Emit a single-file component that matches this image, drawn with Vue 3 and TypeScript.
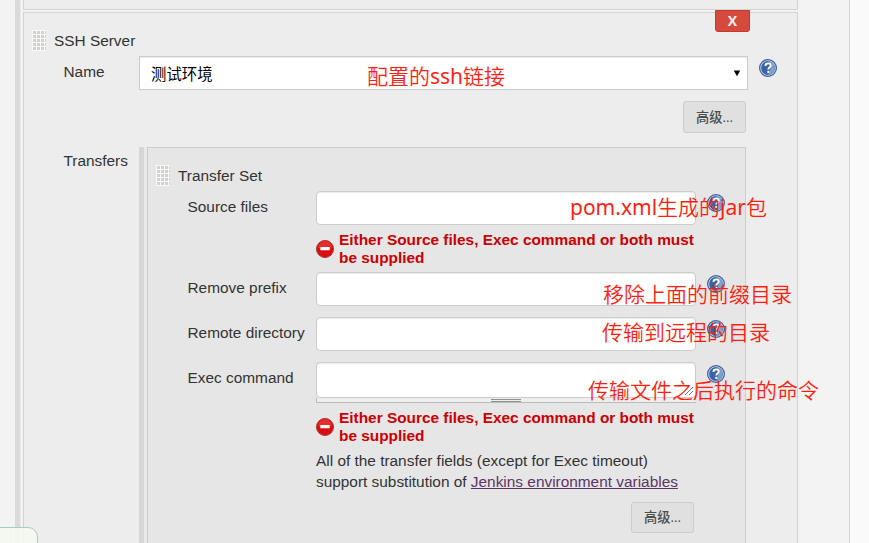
<script setup lang="ts">
import { h, type FunctionalComponent } from 'vue'

interface Field {
  label: string
  kind: 'input' | 'textarea'
  error?: boolean
}

interface Note {
  parts: string[]
  cls: string
}

const fields: Field[] = [
  { label: 'Source files', kind: 'input', error: true },
  { label: 'Remove prefix', kind: 'input' },
  { label: 'Remote directory', kind: 'input' },
  { label: 'Exec command', kind: 'textarea', error: true },
]

const notes: Note[] = [
  { parts: ['配置的', 'ssh', '链接'], cls: 'note-name' },
  { parts: ['pom.xml', '生成的', 'jar', '包'], cls: 'note-source' },
  { parts: ['移除上面的前缀目录'], cls: 'note-prefix' },
  { parts: ['传输到远程的目录'], cls: 'note-remote' },
  { parts: ['传输文件之后执行的命令'], cls: 'note-exec' },
]

const isLatin = (text: string): boolean => /^[a-z.]+$/.test(text)

const HelpIcon: FunctionalComponent = () =>
  h('svg', { width: 18, height: 18, viewBox: '0 0 18 18' }, [
    h('circle', { cx: 9, cy: 9, r: 8.4, fill: '#c9d7ea', stroke: '#3d619b', 'stroke-width': 1.2 }),
    h('circle', { cx: 9, cy: 9, r: 6.9, fill: '#3a65a4' }),
    h('path', { d: 'M9 2.1a6.9 6.9 0 0 1 0 13.8c3-4 3-9 0-13.8z', fill: '#7f9fca' }),
    h('path', {
      d: 'M6.4 6.9C6.5 5 7.6 4.4 9.1 4.4c1.6 0 2.6.8 2.6 2.1 0 1.9-2.4 1.9-2.4 4',
      fill: 'none',
      stroke: '#fff',
      'stroke-width': 1.9,
    }),
    h('rect', { x: 8.3, y: 11.8, width: 2.1, height: 2.1, fill: '#fff' }),
  ])
</script>

<template>
  <div class="page">
    <div class="rail"></div>
    <main class="column">
      <section class="previous"></section>
      <section class="server">
        <button class="remove">X</button>
        <header class="title"><i class="grip"></i><span>SSH Server</span></header>
        <div class="row name-row">
          <label>Name</label>
          <div class="select"><span>测试环境</span><svg width="8" height="7" viewBox="0 0 8 7"><path d="M.8.5h6.4L4 6.2z" /></svg></div>
          <HelpIcon class="help" />
        </div>
        <div class="actions"><button class="advanced">高级...</button></div>
        <div class="row transfers">
          <label>Transfers</label>
          <div class="nested">
            <section class="set">
              <header class="title"><i class="grip"></i><span>Transfer Set</span></header>
              <template v-for="field in fields" :key="field.label">
                <div class="row field" :class="field.kind">
                  <label>{{ field.label }}</label>
                  <div class="control">
                    <div class="box">
                      <svg v-if="field.kind === 'textarea'" class="corner" width="10" height="10" viewBox="0 0 10 10"><path d="M1 9l8-8M5 9l4-4" /></svg>
                    </div>
                    <div v-if="field.kind === 'textarea'" class="handle"><i></i></div>
                  </div>
                  <HelpIcon class="help" />
                </div>
                <div v-if="field.error" class="error">
                  <svg width="18" height="18" viewBox="0 0 18 18">
                    <circle cx="9" cy="9" r="8.5" fill="#d80e10" stroke="#a93432" />
                    <path d="M2 8a7 7 0 0 1 14 0c-4 1.5-10 1.5-14 0z" fill="#e62d2d" />
                    <rect x="4.3" y="7" width="9.4" height="3.2" rx=".5" fill="#fff" />
                  </svg>
                  <p>Either Source files, Exec command or both must<br />be supplied</p>
                </div>
              </template>
              <p class="hint">All of the transfer fields (except for Exec timeout)<br />support substitution of <a>Jenkins environment variables</a></p>
              <div class="actions"><button class="advanced">高级...</button></div>
            </section>
          </div>
        </div>
      </section>
    </main>
    <div class="edge"></div>
    <div class="status"></div>
    <div v-for="note in notes" :key="note.cls" class="note" :class="note.cls"><span v-for="part in note.parts" :key="part" :class="{ latin: isLatin(part) }">{{ part }}</span></div>
  </div>
</template>

<style>
body {
  overflow: hidden;
}
</style>

<style scoped>
* {
  box-sizing: border-box;
}
.page {
  position: relative;
  display: flex;
  width: 869px;
  height: 543px;
  overflow: hidden;
  padding-left: 15px;
  background: #f3f3f3;
  color: #333;
  font: 15.4px/20px "Liberation Sans", "Noto Sans CJK SC", sans-serif;
}
p {
  margin: 0;
}
.rail {
  width: 6px;
  border-left: 5px solid #dadada;
  background: #eaeaea;
}
.column {
  display: flex;
  flex-direction: column;
  gap: 2px;
  width: 775px;
  margin-left: 2px;
}
.previous {
  height: 10px;
  border: 1px solid #d3d3d3;
  border-top: 0;
  background: #ededed;
}
.server {
  position: relative;
  flex: 1;
  min-height: 0;
  border: 1px solid #d3d3d3;
  border-bottom: 0;
  background: #ededed;
}
.edge {
  width: 20px;
  margin-left: auto;
  border-left: 1px solid #d3d3d3;
  background: #fafafa;
}
.remove {
  position: absolute;
  top: -3px;
  right: 47px;
  width: 35px;
  height: 22px;
  padding: 0;
  border: 1px solid #c13b2e;
  border-radius: 0 0 3px 3px;
  background: #d54a3c;
  color: #f7eeee;
  font: bold 14px/20px "Open Sans", sans-serif;
}
.title {
  display: flex;
  align-items: center;
  gap: 8px;
  height: 21px;
  margin: 17px 0 0 8px;
}
.grip {
  width: 14px;
  height: 21px;
  background: conic-gradient(from 90deg at 1px 1px, #d2d2ce 90deg, #fafaf8 0) 0 0 / 4px 4px;
}
.row {
  display: flex;
  align-items: flex-start;
}
label {
  flex: none;
}
.name-row {
  padding: 5px 0 0 39.5px;
}
.name-row label,
.transfers > label {
  width: 75.5px;
}
.name-row label {
  padding-top: 6px;
}
.select {
  display: flex;
  align-items: center;
  justify-content: space-between;
  width: 609px;
  height: 34px;
  padding: 2px 6px 0 11px;
  border: 1px solid #ccc;
  background: #fff;
  box-shadow: inset 0 1px 1px #ececec;
  color: #000;
  font-size: 15.4px;
}
.select span {
  padding-top: 2px;
}
.select svg {
  margin-top: -2px;
}
.help {
  flex: none;
  margin: 3px 0 0 11px;
}
.actions {
  display: flex;
  justify-content: flex-end;
  padding: 11px 51px 0 0;
}
.advanced {
  width: 63px;
  height: 32px;
  padding: 0;
  border: 1px solid #ccc;
  border-radius: 3px;
  background: #e0e0e0;
  color: #4d4d4d;
  font: 500 13.2px/29px "Open Sans", "Noto Sans CJK SC", sans-serif;
}
.transfers {
  padding: 14px 0 0 39.5px;
}
.transfers > label {
  padding-top: 4px;
}
.nested {
  width: 607px;
  padding-left: 3px;
  border-left: 5px solid #d5d5d5;
  background: #e9e9e9;
}
.set {
  height: 420px;
  border: 1px solid #ccc;
  background: #e6e6e6;
}
.set .actions {
  padding-top: 10px;
}
.set .advanced {
  height: 31px;
}
.field {
  height: 45px;
  padding: 5px 0 0 39.5px;
}
.field label {
  width: 128.5px;
  padding-top: 6px;
}
.field.input:has(+ .error) {
  height: 44px;
}
.control {
  width: 380px;
}
.box {
  display: flex;
  align-items: flex-end;
  justify-content: flex-end;
  height: 34px;
  border: 1px solid #ccc;
  border-radius: 4px;
  background: #fff;
  box-shadow: inset 0 1px 1px #ececec;
}
.textarea .box {
  height: 36px;
}
.corner {
  margin: 0 1px 1px 0;
  fill: none;
  stroke: #777;
}
.handle {
  display: flex;
  align-items: center;
  justify-content: center;
  height: 5px;
  padding-right: 2px;
  border: solid #bbb;
  border-width: 0 0 1px 1px;
  background: #eee;
}
.handle i {
  width: 30px;
  height: 3px;
  border: solid #8c948c;
  border-width: 1px 0;
}
.field.textarea {
  height: 51px;
}
.error {
  display: flex;
  align-items: center;
  gap: 5px;
  height: 32px;
  margin: 3px 0 2px 168px;
  color: #c00;
  font-weight: bold;
  line-height: 18px;
  white-space: nowrap;
}
.hint {
  margin: 7px 0 0 168px;
  line-height: 21px;
}
.hint a {
  color: #5c3566;
  text-decoration: underline;
}
.status {
  position: absolute;
  left: -1px;
  bottom: -1px;
  width: 39px;
  height: 17px;
  border: 1px solid #a8cdb8;
  border-radius: 0 10px 0 0;
  background: #f4f8efe6;
}
.note {
  position: absolute;
  color: #ff1e10;
  font: 350 21px/30px "Noto Sans CJK SC", sans-serif;
  white-space: nowrap;
}
.latin {
  font-family: "Noto Sans", sans-serif;
  font-weight: 400;
}
.note-name {
  left: 367px;
  top: 60px;
}
.note-source {
  left: 570px;
  top: 191px;
}
.note-prefix {
  left: 603px;
  top: 278px;
}
.note-remote {
  left: 602px;
  top: 316px;
}
.note-exec {
  left: 588px;
  top: 374px;
}
</style>
